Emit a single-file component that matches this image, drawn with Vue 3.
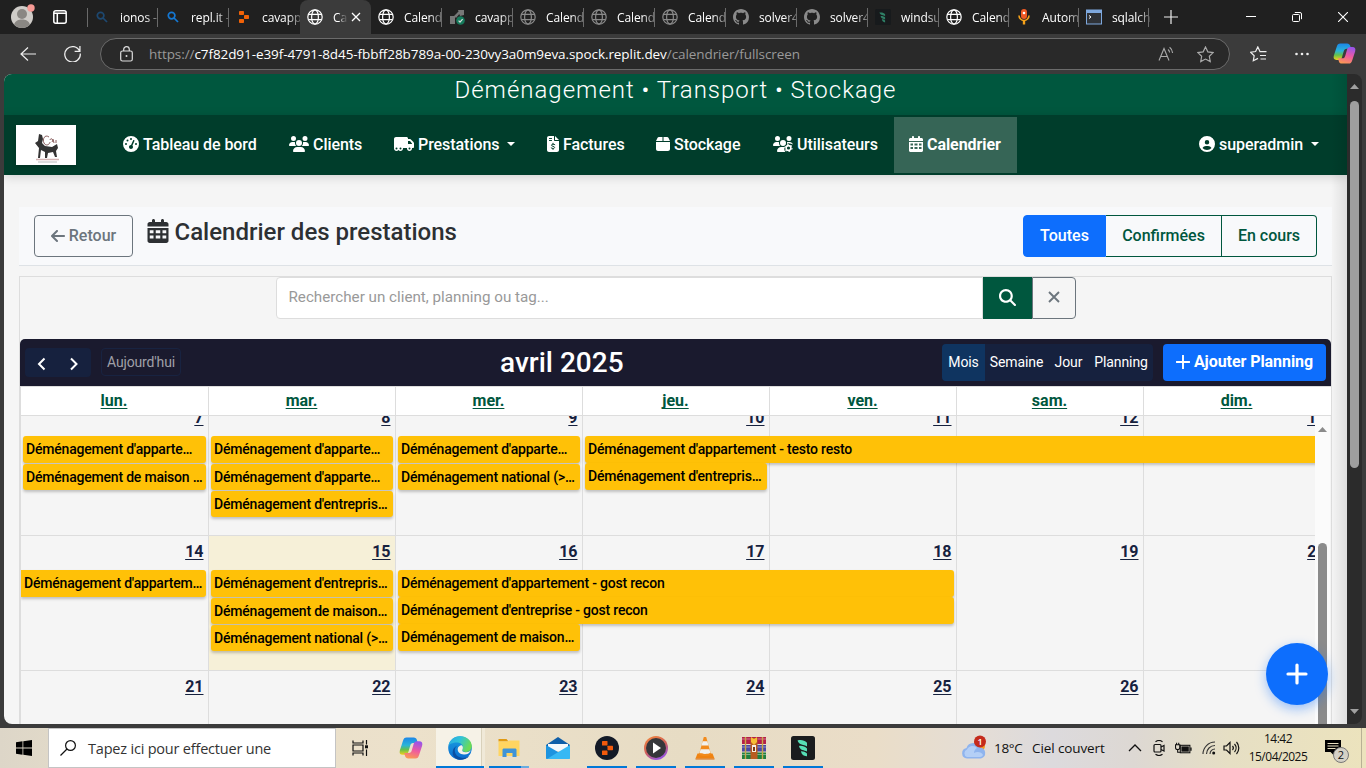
<script setup>
const globe = '<g fill="none" stroke="currentColor" stroke-width="1.2"><circle cx="8" cy="8" r="7.2"/><ellipse cx="8" cy="8" rx="3.4" ry="7.2"/><path d="M1.6 5.3h12.8M1.6 10.7h12.8"/></g>'
const lens = '<g fill="none" stroke="currentColor" stroke-width="1.7"><circle cx="6.6" cy="6.6" r="3.3"/><path d="M9 9l4 4"/></g>'
const github = '<path fill="currentColor" fill-rule="evenodd" d="M8 0C3.58 0 0 3.58 0 8c0 3.54 2.29 6.53 5.47 7.59.4.07.55-.17.55-.38 0-.19-.01-.82-.01-1.49-2.01.37-2.53-.49-2.69-.94-.09-.23-.48-.94-.82-1.13-.28-.15-.68-.52-.01-.53.63-.01 1.08.58 1.23.82.72 1.21 1.87.87 2.33.66.07-.52.28-.87.51-1.07-1.78-.2-3.64-.89-3.64-3.95 0-.87.31-1.59.82-2.15-.08-.2-.36-1.02.08-2.12 0 0 .67-.21 2.2.82.64-.18 1.32-.27 2-.27s1.36.09 2 .27c1.53-1.04 2.2-.82 2.2-.82.44 1.1.16 1.92.08 2.12.51.56.82 1.27.82 2.15 0 3.07-1.87 3.75-3.65 3.95.29.25.54.73.54 1.48 0 1.07-.01 1.93-.01 2.2 0 .21.15.46.55.38A8.01 8.01 0 0 0 16 8c0-4.42-3.58-8-8-8z"/>'
const replit = '<g fill="#f26207"><rect x="3" y="2" width="5" height="4" rx=".8"/><rect x="8" y="6" width="5" height="4" rx=".8"/><rect x="3" y="10" width="5" height="4" rx=".8"/></g>'
const quill = '<rect width="16" height="16" rx="1.5" fill="#171a1c"/><path fill="#2f8066" d="M4.4 3.6c2.2-.5 4.4.1 5.7 1.6v2.1C8.500 6.200 5.500 6.700 4.400 3.600zM5.600 7c1.500-.2 3.500.3 4.500 1.500v2C8.700 9.700 6.200 9.900 5.600 7zM6.800 10.300c1.300 0 2.500.4 3.300 1.200v1.900c-1.600-.1-3-1.200-3.300-3.100z"/>'
const tabs = [
  { i: lens, c: 'lens-dim', t: 'ionos -', sep: 1 },
  { i: lens, c: 'lens-blue', t: 'repl.it -', sep: 1 },
  { i: replit, c: '', t: 'cavapp' },
  { i: globe, c: 'white', t: 'Ca', active: 1 },
  { i: globe, c: 'white', t: 'Calend', sep: 1 },
  { i: '<path fill="#777" d="M1 7h5v8H1zM5 7l5-5 2 1-5 6zM9 1h6v5l-4 1z"/><circle cx="11.500" cy="11.500" r="4.300" fill="#157a5b"/><path d="M9.600 11.600l1.400 1.500 2.600-3" fill="none" stroke="#ddd" stroke-width="1.200"/>', c: '', t: 'cavapp', sep: 1 },
  { i: globe, c: 'dim', t: 'Calend', sep: 1 },
  { i: globe, c: 'dim', t: 'Calend', sep: 1 },
  { i: globe, c: 'dim', t: 'Calend', sep: 1 },
  { i: github, c: 'dim', t: 'solver4', sep: 1 },
  { i: github, c: 'dim', t: 'solver4', sep: 1 },
  { i: quill, c: '', t: 'windsu', sep: 1 },
  { i: globe, c: 'white', t: 'Calend', sep: 1, n: 1 },
  { i: '<rect x="5" y="0" width="6" height="10" rx="3" fill="#ee5a24"/><path d="M3 6.500a5 5 0 0 0 10 0" fill="none" stroke="#f6a21a" stroke-width="1.600"/><path d="M8 11.500v4" stroke="#f6a21a" stroke-width="2.400"/><circle cx="8" cy="4" r="1.300" fill="#fff"/>', c: '', t: 'Autom', sep: 1, n: 1 },
  { i: '<rect x=".5" y="1" width="15" height="14" fill="#2f3237" stroke="#7ea8de"/><path d="M0 1h16v3H0z" fill="#7ea8de"/><path d="M3 6.500l2 1.500-2 1.500" stroke="#fff" fill="none"/>', c: '', t: 'sqlalch', sep: 1, n: 1 },
]

const fa = {
  gauge: ['0 0 512 512', '<path fill="currentColor" fill-rule="evenodd" d="M0 256a256 256 0 1 1 512 0A256 256 0 1 1 0 256zm288-160a32 32 0 1 0-64 0 32 32 0 1 0 64 0zM256 416c35.300 0 64-28.700 64-64 0-17.400-6.900-33.100-18.100-44.600L366 161.700c5.300-12.100-.2-26.300-12.300-31.600s-26.300.2-31.600 12.300L257.900 288c-.600 0-1.300 0-1.900 0-35.300 0-64 28.700-64 64s28.700 64 64 64zM176 144a32 32 0 1 0-64 0 32 32 0 1 0 64 0zM96 288a32 32 0 1 0 0-64 32 32 0 1 0 0 64zm352-32a32 32 0 1 0-64 0 32 32 0 1 0 64 0z"/>'],
  users: ['0 0 640 512', '<path fill="currentColor" d="M144 0a80 80 0 1 1 0 160A80 80 0 1 1 144 0zM512 0a80 80 0 1 1 0 160A80 80 0 1 1 512 0zM0 298.700C0 239.800 47.800 192 106.700 192l42.700 0c15.900 0 31 3.500 44.600 9.700c-1.300 7.200-1.900 14.700-1.900 22.300c0 38.200 16.800 72.500 43.300 96L21.300 320C9.600 320 0 310.400 0 298.700zM405.300 320c26.600-23.500 43.300-57.800 43.300-96c0-7.600-.7-15-1.900-22.300c13.600-6.300 28.700-9.700 44.600-9.700l42.700 0C592.200 192 640 239.800 640 298.700c0 11.800-9.600 21.300-21.300 21.300l-213.300 0zM224 224a96 96 0 1 1 192 0 96 96 0 1 1 -192 0zM128 485.300C128 411.700 187.700 352 261.300 352l117.300 0C452.300 352 512 411.700 512 485.300c0 14.700-11.900 26.700-26.700 26.700l-330.700 0c-14.700 0-26.700-11.900-26.700-26.700z"/>'],
  truck: ['0 0 640 512', '<path fill="currentColor" fill-rule="evenodd" d="M64 32C28.700 32 0 60.700 0 96V400c0 44.200 35.800 80 80 80 26.200 0 49.400-12.600 64-32 14.600 19.400 37.800 32 64 32 44.200 0 80-35.800 80-80 0-5.500-.6-10.800-1.600-16H417.600c-1 5.200-1.600 10.500-1.600 16 0 44.200 35.800 80 80 80s80-35.800 80-80c0-5.500-.6-10.800-1.600-16H608c17.700 0 32-14.300 32-32V238.600c0-17-6.700-33.300-18.700-45.300L557.300 129.300C545.300 117.300 529 96 512 96H448V80c0-26.500-21.500-48-48-48zM576 256V238.600L512 160h-64v96zM80 368a32 32 0 1 1 0 64 32 32 0 1 1 0-64zm128 0a32 32 0 1 1 0 64 32 32 0 1 1 0-64zm288 0a32 32 0 1 1 0 64 32 32 0 1 1 0-64z"/>'],
  invoice: ['0 0 384 512', '<path fill="currentColor" d="M64 0C28.700 0 0 28.700 0 64V448c0 35.300 28.700 64 64 64H320c35.300 0 64-28.700 64-64V160H256c-17.700 0-32-14.300-32-32V0zM256 0V128H384z"/><g fill="none" stroke="#003d2b" stroke-width="30" stroke-linecap="round"><path d="M78 80h68M78 144h68M250 276c-30-22-105-24-108 18-3 44 104 26 102 72-2 42-74 40-110 16M192 232v32M192 400v32"/></g>'],
  box: ['0 0 448 512', '<path fill="currentColor" d="M50.700 58.500L0 160l208 0 0-128L93.700 32C75.500 32 58.900 42.300 50.700 58.500zM240 160l208 0L397.300 58.500C389.100 42.300 372.500 32 354.300 32L240 32l0 128zm208 32L0 192 0 416c0 35.300 28.700 64 64 64l320 0c35.300 0 64-28.700 64-64l0-224z"/>'],
  gear: ['0 0 640 512', '<path fill="currentColor" d="M144 160A80 80 0 1 0 144 0a80 80 0 1 0 0 160zm368 0A80 80 0 1 0 512 0a80 80 0 1 0 0 160zM0 298.700C0 310.400 9.600 320 21.300 320H235.400c-26.600-23.500-43.300-57.800-43.300-96 0-7.600.7-15 1.900-22.300-13.600-6.300-28.700-9.700-44.600-9.700H106.700C47.800 192 0 239.800 0 298.700zM320 320a96 96 0 1 0 0-192 96 96 0 1 0 0 192zM261.300 352C187.700 352 128 411.700 128 485.300c0 14.700 11.900 26.700 26.700 26.700H400c-40-40-50-110-20-160zM446 202c14-7 29-10 45-10h43c50 0 92 34 104 80l-60-28-84-12-44 20z"/><circle cx="496" cy="384" r="76" fill="none" stroke="currentColor" stroke-width="50"/><circle cx="496" cy="384" r="112" fill="none" stroke="currentColor" stroke-width="34" stroke-dasharray="50 67.300"/>'],
  cal: ['0 0 448 512', '<path fill="currentColor" d="M128 0c17.700 0 32 14.300 32 32V64H288V32c0-17.700 14.300-32 32-32s32 14.300 32 32V64h48c26.500 0 48 21.500 48 48v48H0V112C0 85.500 21.500 64 48 64H96V32c0-17.700 14.300-32 32-32z"/><path fill="currentColor" fill-rule="evenodd" d="M0 192H448V464c0 26.500-21.500 48-48 48H48c-26.500 0-48-21.500-48-48V192zM48 240v64h80v-64zM176 240v64h96v-64zM320 240v64h80v-64zM48 352v64h80v-64zM176 352v64h96v-64zM320 352v64h80v-64z"/>'],
  user: ['0 0 512 512', '<path fill="currentColor" fill-rule="evenodd" d="M399 384.200C376.900 345.800 335.400 320 288 320l-64 0c-47.400 0-88.900 25.800-111 64.200c35.200 39.200 86.200 63.800 143 63.800s107.800-24.700 143-63.800zM0 256a256 256 0 1 1 512 0A256 256 0 1 1 0 256zm256 16a72 72 0 1 0 0-144 72 72 0 1 0 0 144z"/>'],
}
const nav = [
  { i: 'gauge', t: 'Tableau de bord', w: 166, iw: 16 },
  { i: 'users', t: 'Clients', w: 105, iw: 20 },
  { i: 'truck', t: 'Prestations', w: 153, iw: 20, caret: 1 },
  { i: 'invoice', t: 'Factures', w: 109, iw: 12 },
  { i: 'box', t: 'Stockage', w: 117, iw: 14 },
  { i: 'gear', t: 'Utilisateurs', w: 137, iw: 20 },
  { i: 'cal', t: 'Calendrier', w: 123, iw: 14, on: 1 },
]
const days = ['lun.', 'mar.', 'mer.', 'jeu.', 'ven.', 'sam.', 'dim.']
// events: [column, span, line, label, modifier classes]
const weeks = [
  { c: 'first', d: [7, 8, 9, 10, 11, 12, 13], e: [
    [1, 1, 1, "Déménagement d'apparte…"], [1, 1, 2, 'Déménagement de maison …', 'loose'],
    [2, 1, 1, "Déménagement d'apparte…"], [2, 1, 2, "Déménagement d'apparte…", 'loose'], [2, 1, 3, "Déménagement d'entrepris…", 'loose'],
    [3, 1, 1, "Déménagement d'apparte…"], [3, 1, 2, 'Déménagement national (>…', 'loose'],
    [4, 4, 1, "Déménagement d'appartement - testo resto"], [4, 1, 2, "Déménagement d'entrepris…"]] },
  { c: '', d: [14, 15, 16, 17, 18, 19, 20], e: [
    [1, 1, 1, "Déménagement d'appartem…", 'cont'],
    [2, 1, 1, "Déménagement d'entrepris…"], [2, 1, 2, 'Déménagement de maison…', 'loose'], [2, 1, 3, 'Déménagement national (>…', 'loose'],
    [3, 3, 1, "Déménagement d'appartement - gost recon"], [3, 3, 2, "Déménagement d'entreprise - gost recon"], [3, 1, 3, 'Déménagement de maison…']] },
  { c: '', d: [21, 22, 23, 24, 25, 26], e: [] },
]

const copilot = '<path d="M7.500 1.500h7.200c1.800 0 2.800 1 3.300 2.800l.8 2.700h-4.600c-1.800 0-2.500 1-3 2.700l-1.900 6.500c-.5 1.700-1.600 2.600-3.300 2.600H3.800c-2.800 0-3.700-1.700-2.900-4.600L3.900 5c.7-2.400 1.700-3.500 3.600-3.500z" fill="url(#cpA)"/><path d="M16.500 22.500H9.300c-1.800 0-2.800-1-3.300-2.800L5.200 17h4.600c1.800 0 2.500-1 3-2.700l1.900-6.500c.5-1.700 1.600-2.600 3.300-2.600h2.200c2.800 0 3.700 1.700 2.900 4.600l-3 9.200c-.7 2.400-1.700 3.500-3.600 3.500z" fill="url(#cpB)"/>'
const apps = [
  { k: 'cop', s: copilot },
  { k: 'edge', u: 1, s: '<circle cx="12" cy="12" r="11.800" fill="url(#egB)"/><path d="M.4 10C1.300 4.200 6 .2 12 .2c7 0 11.800 4.700 11.800 9.800 0 3.700-2.700 6-6 6-2.300 0-3.800-.8-3.800-1.900 0-.8 1-1.200 1-2.900C15 8.800 12.400 6.600 9 6.600 4.600 6.600 1 8.400.4 10z" fill="url(#egA)"/><path d="M9.600 9.500c-3 1.700-3.600 5.300-1.900 8.600 2.300 4.200 8.600 5.300 13.800 1.700-2.600 3.500-8 5-12.300 3.400C3 20.500 3 12 9.600 9.500z" fill="#0b4fa2"/><path d="M13.900 9.200c1.200 1.400 1.300 3 .5 4.300-.8 1.500.6 2.700 3.600 2.700 2 0 3.800-.8 4.900-2-1 3-4 4.500-7 4.300-4-.300-6.400-2.600-6.200-5.500.1-2 1.800-3.800 4.200-3.800z" fill="#f5f2e8"/>' },
  { k: 'exp', u: 1, s: '<path d="M1.500 3h8l2 2.500H1.500z" fill="#e09a12"/><path d="M1.500 5.500l9 0 1.500-1h10.500V20H1.500z" fill="#ffd560"/><path d="M5.500 21v-7c0-1 .5-1.500 1.500-1.500h11c1 0 1.500.5 1.500 1.500v7h-4v-4h-6v4z" fill="#3f94d8"/>' },
  { k: 'mail', s: '<path d="M0 9L12 1l12 8v3H0z" fill="#0f5ea8"/><path d="M2 8h20v7H2z" fill="#f5f8fb"/><path d="M0 9l24 14H1c-.6 0-1-.4-1-1z" fill="#1d93df"/><path d="M24 9L9 18l-8 5h22c.6 0 1-.4 1-1z" fill="#37b8f4"/>' },
  { k: 'rep', u: 1, s: '<circle cx="12" cy="12" r="12" fill="#131a27"/><g fill="#f25a0c"><rect x="7" y="5" width="5.500" height="4.500" rx=".6"/><rect x="12.500" y="9.700" width="5.500" height="4.500" rx=".6"/><rect x="7" y="14.500" width="5.500" height="4.500" rx=".6"/></g>' },
  { k: 'med', u: 1, s: '<circle cx="12" cy="12" r="12" fill="url(#mpA)"/><circle cx="12" cy="12" r="10" fill="#35363a"/><path d="M9 6.500l8 5.500-8 5.500z" fill="#fff"/>' },
  { k: 'vlc', u: 1, s: '<path d="M4.500 17.500h15l2 5h-19z" fill="#f08311"/><path d="M10.800 1h2.400l4.800 17.500c-2 2-10 2-12 0z" fill="#f28b1d"/><path d="M9.700 5.200h4.600l1.200 4.300h-7zM7.600 13.200h8.800l1 3.500c-2 1.600-8.800 1.600-10.800 0z" fill="#f1f1ef"/><path d="M2.500 22.500h19v1h-19z" fill="#d8680a"/>' },
  { k: 'rar', u: 1, s: '<path d="M0 1h24v7H0z" fill="#b51f48"/><path d="M0 9h24v6.500H0z" fill="#4a48a4"/><path d="M0 16.500h24V23H0z" fill="#1f8040"/><path d="M0 3h24M0 11h24M0 18.500h24" stroke="#ffffff66" stroke-width="1"/><path d="M3.500 1v22M20.500 1v22" stroke="#c9a648" stroke-width="1.400"/><path d="M8.500 2h7v21h-7z" fill="#b95c20"/><path d="M9 1l3 2 3-2v5l-3 3-3-3z" fill="#f6bd34"/><path d="M10 9h4v7h-4z" fill="#f7eee2"/><path d="M11 11h2v4h-2z" fill="#7a3c17"/>' },
  { k: 'wind', u: 1, s: '<rect width="24" height="24" rx="2.500" fill="#1a1c1e"/><path fill="#56dfb6" d="M6.500 4.500c3.500-1 7-.2 9.500 2.300v3.600c-3-2.200-8-.9-9.500-5.900zM8 10c2.700-.5 6 .4 8 2.400v3.100c-2.600-1.400-7.200-.9-8-5.500zM10 15.300c2.200-.1 4.300.6 6 2.100v2.800c-3 .2-5.700-1.700-6-4.900z"/>' },
]
</script>

<template>
  <div class="screen">
    <svg class="defs" width="0" height="0">
      <defs>
        <linearGradient id="cpA" x1="0" y1="0" x2="0" y2="1"><stop offset="0" stop-color="#1c86e8" /><stop offset=".45" stop-color="#2ab4d8" /><stop offset=".7" stop-color="#63c04c" /><stop offset="1" stop-color="#f3cf1c" /></linearGradient>
        <linearGradient id="cpB" x1=".6" y1="0" x2=".3" y2="1"><stop offset="0" stop-color="#9a55e8" /><stop offset=".5" stop-color="#ee5aa0" /><stop offset="1" stop-color="#fb9a52" /></linearGradient>
        <linearGradient id="egA" x1="0" y1="0" x2="1" y2=".4"><stop offset="0" stop-color="#2aa5e4" /><stop offset=".5" stop-color="#30c3d8" /><stop offset="1" stop-color="#6ddb54" /></linearGradient>
        <linearGradient id="egB" x1="0" y1="0" x2="0" y2="1"><stop offset="0" stop-color="#1aa0e0" /><stop offset="1" stop-color="#0b6bd0" /></linearGradient>
        <linearGradient id="mpA" x1="0" y1="0" x2=".5" y2="1"><stop offset="0" stop-color="#f58a3c" /><stop offset=".6" stop-color="#d0605a" /><stop offset="1" stop-color="#9a55d8" /></linearGradient>
      </defs>
    </svg>

    <div class="tabbar">
      <svg class="avatar" viewBox="0 0 26 26"><circle cx="12" cy="14" r="11" fill="#cfccc8" /><circle cx="12" cy="11" r="5" fill="#8a8783" /><path d="M4 21.500c1.500-4 4.500-5 8-5s6.500 1 8 5c-4 4.500-12 4.500-16 0z" fill="#8a8783" /><circle cx="21" cy="5" r="3.700" fill="#f79a95" /></svg>
      <svg class="panel" viewBox="0 0 14 14"><rect x=".8" y=".8" width="12.400" height="12.400" rx="2" fill="none" stroke="#fff" stroke-width="1.500" /><path d="M1 3.300h12M4.300 4v9" stroke="#fff" stroke-width="1.500" /></svg>
      <div class="tabs">
        <div v-for="(t, k) in tabs" :key="k" class="tab" :class="{ active: t.active, sep: t.sep, thin: t.n }">
          <svg viewBox="0 0 16 16" :class="t.c" v-html="t.i"></svg>
          <span class="tt">{{ t.t }}</span>
          <svg v-if="t.active" class="close" viewBox="0 0 10 10"><path d="M1 1l8 8M9 1L1 9" stroke="#fff" stroke-width="1.300" /></svg>
        </div>
      </div>
      <svg class="newtab" viewBox="0 0 14 14"><path d="M7 0v14M0 7h14" stroke="#eee" stroke-width="1.200" /></svg>
      <div class="winbtns">
        <svg viewBox="0 0 10 10"><path d="M0 4.500h10" stroke="#fff" /></svg>
        <svg viewBox="0 0 10 10"><rect x=".5" y="2.500" width="7" height="7" rx="1" fill="none" stroke="#fff" /><path d="M2.800.5H8A1.500 1.500 0 0 1 9.500 2v5.200" fill="none" stroke="#fff" /></svg>
        <svg viewBox="0 0 10 10"><path d="M0 0l10 10M10 0L0 10" stroke="#fff" stroke-width="1.100" /></svg>
      </div>
    </div>

    <div class="toolbar">
      <svg class="back" viewBox="0 0 16 16"><path d="M8 1.500L1 8l7 6.500M1 8h15" fill="none" stroke="#eee" stroke-width="1.200" /></svg>
      <svg class="reload" viewBox="0 0 16 16"><path d="M14.800 6A7.300 7.300 0 1 0 15.300 8M15 1v5h-5" fill="none" stroke="#eee" stroke-width="1.200" /></svg>
      <div class="address">
        <svg class="lock" viewBox="0 0 13 16"><rect x=".7" y="5" width="11.600" height="10" rx="1.800" fill="none" stroke="#ddd" stroke-width="1.200" /><path d="M3.700 5V3.500a2.800 2.800 0 0 1 5.600 0V5" fill="none" stroke="#ddd" stroke-width="1.200" /><circle cx="6.500" cy="10" r="1" fill="#ddd" /></svg>
        <span class="url"><i>https://</i>c7f82d91-e39f-4791-8d45-fbbff28b789a-00-230vy3a0m9eva.spock.replit.dev<i>/calendrier/fullscreen</i></span>
        <svg class="read" viewBox="0 0 16 16"><path d="M1 14.500L6 2.500l5 12M2.800 10.500h6.500M10 3.500a4 4 0 0 1 1.600 3M11.600 1.300a7.500 7.500 0 0 1 3 5.700" fill="none" stroke="#aaa" stroke-width="1.100" /></svg>
        <svg class="star" viewBox="0 0 16 16"><path d="M8 .9l2.200 4.600 5 .7-3.600 3.500.9 5L8 12.300l-4.500 2.400.9-5L.8 6.200l5-.7z" fill="none" stroke="#aaa" stroke-width="1.100" /></svg>
      </div>
      <svg class="favs" viewBox="0 0 17 16"><path d="M9.500 4.600L7.800.9 5.600 5.500l-5 .7 3.600 3.500-.9 5L8 12.400M9.500 4.600l.5 1h6.500M10 9.500h6M10.500 13h5.500" fill="none" stroke="#eee" stroke-width="1.200" /></svg>
      <svg class="dots" viewBox="0 0 14 4"><circle cx="1.500" cy="2" r="1.300" fill="#eee" /><circle cx="7" cy="2" r="1.300" fill="#eee" /><circle cx="12.500" cy="2" r="1.300" fill="#eee" /></svg>
      <svg class="cop" viewBox="0 0 24 24" v-html="copilot"></svg>
    </div>

    <div class="frame">
      <div class="page">
        <div class="banner">Déménagement • Transport • Stockage</div>
        <div class="nav">
          <svg class="logo" viewBox="0 0 60 40">
            <rect width="60" height="40" fill="#fff" />
            <path d="M23 9l3 1 1 4-1 4 3 3 7 1 5-3 1 4-2 3 1 6h-2l-2-5-5 1-1 5h-2v-6l-4-2-1 8h-2l1-10-4-5 3-2z" fill="#333" />
            <path d="M33 12c-4-3-7 2-5 6s6 1 6-1M34 15c1-3 4 0 2 2M37 14l1 4M40 15v3" fill="none" stroke="#7a4a4a" stroke-width=".9" />
            <path d="M20 34.500h23" stroke="#d4b4b4" stroke-width="1.400" /><path d="M22 37h19" stroke="#bbb" />
          </svg>
          <div v-for="n in nav" :key="n.t" class="item" :class="{ on: n.on }" :style="{ width: n.w + 'px' }">
            <svg :viewBox="fa[n.i][0]" :style="{ width: n.iw + 'px' }" v-html="fa[n.i][1]"></svg><span>{{ n.t }}</span><b v-if="n.caret" class="caret"></b>
          </div>
          <div class="item me"><svg :viewBox="fa.user[0]" v-html="fa.user[1]"></svg><span>superadmin</span><b class="caret"></b></div>
        </div>

        <div class="head">
          <div class="retour"><svg viewBox="0 0 448 512"><path fill="currentColor" d="M9.400 233.400c-12.500 12.500-12.500 32.800 0 45.300l160 160c12.500 12.500 32.800 12.500 45.300 0s12.500-32.800 0-45.300L109.200 288 416 288c17.700 0 32-14.300 32-32s-14.300-32-32-32l-306.700 0L214.600 118.600c12.500-12.500 12.500-32.800 0-45.300s-32.800-12.500-45.300 0l-160 160z" /></svg>Retour</div>
          <div class="title"><svg :viewBox="fa.cal[0]" v-html="fa.cal[1]"></svg><span>Calendrier des prestations</span></div>
          <div class="filters"><span class="sel">Toutes</span><span class="mid">Confirmées</span><span class="last">En cours</span></div>
        </div>

        <div class="calbox">
          <div class="search">
            <div class="input">Rechercher un client, planning ou tag...</div>
            <div class="go"><svg viewBox="0 0 512 512"><path fill="#fff" d="M416 208c0 45.900-14.900 88.300-40 122.700L502.600 457.400c12.500 12.500 12.500 32.800 0 45.300s-32.800 12.500-45.300 0L330.700 376c-34.400 25.200-76.800 40-122.700 40C93.100 416 0 322.900 0 208S93.100 0 208 0S416 93.100 416 208zM208 352a144 144 0 1 0 0-288 144 144 0 1 0 0 288z" /></svg></div>
            <div class="clear"><svg viewBox="0 0 12 12"><path d="M1 1l10 10M11 1l-10 10" stroke="#6c757d" stroke-width="1.900" /></svg></div>
          </div>
          <div class="fcbar">
            <div class="prevnext">
              <svg viewBox="0 0 10 14"><path d="M7.500 1.500L2 7 7.500 12.500" fill="none" stroke="#fff" stroke-width="2" /></svg>
              <svg viewBox="0 0 10 14"><path d="M2 1.500L7.500 7 2 12.500" fill="none" stroke="#fff" stroke-width="2" /></svg>
            </div>
            <div class="today">Aujourd'hui</div>
            <div class="month">avril 2025</div>
            <div class="views"><span class="v1">Mois</span><span class="v2">Semaine</span><span class="v3">Jour</span><span class="v4">Planning</span></div>
            <div class="add"><svg viewBox="0 0 14 14"><path d="M7 .500v13M.5 7h13" stroke="#fff" stroke-width="1.900" stroke-linecap="round" /></svg>Ajouter Planning</div>
          </div>
          <div class="dayhead"><span v-for="d in days" :key="d"><u>{{ d }}</u></span></div>
          <div class="scroller">
            <div class="weeks">
              <div v-for="(w, r) in weeks" :key="r" class="week" :class="w.c">
                <div v-for="(d, c) in w.d" :key="d" class="cell" :class="{ now: d === 15 }" :style="{ gridColumn: c + 1 }"><u>{{ d }}</u></div>
                <div v-for="(e, k) in w.e" :key="'e' + k" class="ev" :class="e[4]" :style="{ gridColumn: e[0] + ' / span ' + e[1], gridRow: e[2] + 1 }">{{ e[3] }}</div>
              </div>
            </div>
            <div class="inner-sb"><svg viewBox="0 0 9 5"><path d="M0 5L4.500 0 9 5z" fill="#8b8b8b" /></svg><div class="thumb"></div></div>
          </div>
        </div>
        <div class="edge-shade"></div>
        <div class="fab"><svg viewBox="0 0 22 22"><path d="M11 2v18M2 11h18" stroke="#fff" stroke-width="3.200" stroke-linecap="round" /></svg></div>
      </div>
      <div class="outer-sb">
        <svg viewBox="0 0 9 5"><path d="M0 5L4.500 0 9 5z" fill="#a0a0a0" /></svg>
        <div class="thumb"></div>
        <svg class="down" viewBox="0 0 9 5"><path d="M0 0l4.500 5L9 0z" fill="#a0a0a0" /></svg>
      </div>
    </div>

    <div class="taskbar">
      <svg class="win" viewBox="0 0 16 16"><path d="M0 2.200L6.500 1.300v6.300H0zM7.300 1.200L16 0v7.600H7.300zM0 8.400h6.500v6.300L0 13.800zM7.300 8.400H16V16l-8.700-1.200z" /></svg>
      <div class="tsearch"><svg viewBox="0 0 16 16"><circle cx="10.500" cy="5.500" r="4.900" fill="none" stroke="#111" stroke-width="1.200" /><path d="M7 9L.5 15.500" stroke="#111" stroke-width="1.200" /></svg><span>Tapez ici pour effectuer une</span></div>
      <svg class="tview" viewBox="0 0 17 16"><g fill="none" stroke="#111" stroke-width="1.200"><path d="M1 .500v2.500h10V.5M1 15.500V13h10v2.500M1 5h10v6H1zM14.500 0v4.500M14.500 9.500V16" /></g><rect x="13" y="5.300" width="3" height="3" fill="#111" /></svg>
      <div v-for="a in apps" :key="a.k" class="app" :class="[a.k, { run: a.u }]"><svg viewBox="0 0 24 24" v-html="a.s"></svg></div>
      <div class="weather">
        <svg viewBox="0 0 26 26"><circle cx="18" cy="11" r="6" fill="#f59a23" /><path d="M6 23.500a5.300 5.300 0 0 1-.5-10.500A7.200 7.200 0 0 1 19 12.500a5.600 5.600 0 0 1 1 11z" fill="#8fb4ee" /><path d="M6 22a4 4 0 0 1 0-7.500A6 6 0 0 1 16 13c-2 1-3 3-3 5 3-2 8-1 9 2-1 2-3 2-4 2z" fill="#b4cff6" /><circle cx="19" cy="6.500" r="6" fill="#c42b1c" /></svg>
        <span class="wb">1</span>
        <span class="temp">18°C</span><span class="sky">Ciel couvert</span>
      </div>
      <div class="tray">
        <svg class="t1" viewBox="0 0 14 8"><path d="M1 7l6-6 6 6" fill="none" stroke="#111" stroke-width="1.300" /></svg>
        <svg class="t2" viewBox="0 0 12 16"><g fill="none" stroke="#111" stroke-width="1.200"><rect x="1" y="4.500" width="7" height="7.500" rx="1" /><path d="M8 7l3-1.500v5.500L8 9.500M2.500 1.700C4.500.300 7.500.300 9.500 1.700M2.500 14.300c2 1.400 5 1.400 7 0" /></g></svg>
        <svg class="t3" viewBox="0 0 16 12"><rect x="5" y="3" width="9" height="7" fill="#e4dfd2" stroke="#111" /><path d="M6 4h7v5H6z" fill="#111" /><path d="M15 5v3" stroke="#111" stroke-width="1.300" /><path d="M.5 2.500h4v2.500a2 2 0 0 1-4 0zM1.500.5v2M3.500.5v2M2.500 7v2.500H5" fill="none" stroke="#111" /></svg>
        <svg class="t4" viewBox="0 0 14 14"><g fill="none" stroke="#333" stroke-width="1.100"><path d="M1 13A12 12 0 0 1 13 1M4.500 13A8.500 8.500 0 0 1 13 4.500M8 13a5 5 0 0 1 5-5" /></g><circle cx="11.700" cy="12" r="1.500" fill="#111" /></svg>
        <svg class="t5" viewBox="0 0 17 14"><g fill="none" stroke="#111" stroke-width="1.200"><path d="M1 5h2.500L7 1.500v11L3.500 9H1zM9.500 5a3 3 0 0 1 0 4M11.500 3a6 6 0 0 1 0 8M13.500 1a9 9 0 0 1 0 12" /></g></svg>
      </div>
      <div class="clock"><span class="hm">14:42</span><span class="dt">15/04/2025</span></div>
      <div class="notif"><svg viewBox="0 0 16 16"><path d="M0 0h16v12H9v3.500L5.500 12H0z" /><path d="M2.500 3.500h11M2.500 6h11M2.500 8.500h8" stroke="#e8dfc0" /></svg><span>2</span></div>
      <div class="peek"></div>
    </div>
  </div>
</template>

<style>
html, body { margin: 0; overflow: hidden; background: #3b3b3b; }
</style>
<style scoped>
* { box-sizing: border-box; }
.screen { width: 1366px; height: 768px; overflow: hidden; background: #3b3b3b; font-family: Roboto, sans-serif; display: flex; flex-direction: column; position: relative; }
.defs { position: absolute; }
svg { display: block; flex: none; }
.tabbar { height: 34px; background: #202020; display: flex; align-items: center; font: 12px "Open Sans", sans-serif; color: #fff; flex: none; }
.avatar { width: 26px; height: 26px; margin: -3px 0 0 10px; }
.panel { width: 14px; height: 14px; margin-left: 17px; }
.tabs { display: flex; margin-left: 20px; height: 34px; }
.tab { width: 71px; height: 34px; display: flex; align-items: center; position: relative; padding-left: 7px; flex: none; }
.tab.thin { width: 70px; }
.tab.sep::after { content: ""; position: absolute; right: 0; top: 8px; width: 1px; height: 19px; background: #6a6a6a; }
.tab:first-child::before { content: ""; position: absolute; left: 0; top: 8px; width: 1px; height: 19px; background: #6a6a6a; }
.tab svg { width: 16px; height: 16px; }
.tt { margin-left: 10px; width: 38px; white-space: nowrap; letter-spacing: -.1px; -webkit-mask-image: linear-gradient(90deg, #000 65%, rgba(0,0,0,.3)); mask-image: linear-gradient(90deg, #000 65%, rgba(0,0,0,.3)); }
.white { color: #fff; } .dim { color: #8a8a8a; } .lens-dim { color: #1d4870; } .lens-blue { color: #1478d4; }
.tab.active { background: #3b3b3b; border-radius: 8px 8px 0 0; }
.tab.active .tt { width: 14px; -webkit-mask-image: linear-gradient(90deg, #000 40%, rgba(0,0,0,.2) 85%); mask-image: linear-gradient(90deg, #000 40%, rgba(0,0,0,.2) 85%); }
.tab.active .close { width: 10px; height: 10px; margin-left: 4px; }
.newtab { width: 14px; height: 14px; margin-left: 15px; }
.winbtns { margin-left: auto; display: flex; gap: 36px; padding-right: 18px; }
.winbtns svg { width: 10px; height: 10px; }
.toolbar { height: 39px; display: flex; align-items: center; flex: none; }
.back { width: 16px; height: 16px; margin-left: 20px; }
.reload { width: 17px; height: 17px; margin-left: 28px; }
.address { margin-left: 19px; width: 1130px; height: 32px; border: 1px solid #6b6b6b; border-radius: 16px; background: #292929; display: flex; align-items: center; margin-top: 1px; flex: none; }
.lock { width: 13px; height: 16px; margin: -1px 0 0 19px; }
.url { margin: -1px 0 0 16px; font: 13.5px "Open Sans", sans-serif; color: #fff; white-space: nowrap; letter-spacing: -.08px; width: 1000px; }
.url i { font-style: normal; color: #999; }
.read { width: 16px; height: 16px; margin-left: 9px; }
.star { width: 17px; height: 17px; margin-left: 23px; }
.favs { width: 17px; height: 16px; margin-left: 20px; }
.dots { width: 14px; height: 4px; margin-left: 28px; }
.cop { width: 23px; height: 23px; margin-left: 24px; }
.frame { height: 650px; margin: 1px 4px 0 4px; display: flex; border-radius: 8px; overflow: hidden; flex: none; }
.page { width: 1343px; height: 650px; background: #f5f5f5; position: relative; overflow: hidden; flex: none; }
.banner { height: 41px; background: #00573e; color: #fff; font-weight: 300; font-size: 24px; line-height: 33px; text-align: center; letter-spacing: 1px; }
.nav { height: 60px; background: #003d2b; display: flex; align-items: center; box-shadow: 0 2px 10px rgba(0,0,0,.15); position: relative; color: #fff; font-size: 16px; font-weight: 500; }
.logo { width: 60px; height: 40px; margin: 0 31px 0 12px; box-shadow: 0 2px 4px rgba(0,0,0,.2); }
.item { height: 56px; display: flex; align-items: center; padding: 0 0 2px 16px; white-space: nowrap; flex: none; letter-spacing: -.06px; }
.item svg { height: 16px; margin: 0 4px 0 0; }
.item.on { background: #366556; padding-left: 15px; font-weight: 700; }
.item.me { margin-left: auto; padding: 0 28px 2px 0; }
.caret { border: 4px solid transparent; border-top-color: #fff; border-bottom: 0; margin-left: 8px; }
.head { margin: 32px 15px 0; height: 59px; background: #f8f9fb; border-bottom: 1px solid #dee2e6; display: flex; padding: 8px 15px; position: relative; }
.retour { width: 99px; height: 42px; border: 1px solid #6c757d; border-radius: 4px; color: #6c757d; font-size: 16px; font-weight: 500; display: flex; align-items: center; justify-content: center; padding-bottom: 1px; }
.retour svg { width: 14px; height: 16px; margin-right: 4px; }
.title { display: flex; margin-left: 14px; color: #2d3033; font-size: 24px; font-weight: 500; line-height: 34px; white-space: nowrap; }
.title svg { width: 22px; height: 24px; margin: 4px 5.500px 0 0; }
.filters { margin-left: auto; display: flex; height: 42px; font-size: 16px; font-weight: 500; color: #00573e; line-height: 40px; text-align: center; }
.filters span { border: 1px solid #00573e; }
.filters .sel { width: 83px; background: #0d6efd; color: #fff; border-color: #0d6efd; border-radius: 4px 0 0 4px; }
.filters .mid { width: 116px; border-left: 0; }
.filters .last { width: 95px; border-left: 0; border-radius: 0 4px 4px 0; }
.calbox { margin: 10px 15px 0; border: 1px solid #ddd; height: 470px; }
.search { display: flex; height: 42px; margin-left: 256px; }
.input { width: 707px; border: 1px solid #ddd; border-radius: 4px 0 0 4px; background: #fff; color: #999; font-size: 15.2px; line-height: 38px; padding-left: 11.500px; }
.go { width: 49px; background: #00573e; display: flex; align-items: center; justify-content: center; }
.go svg { width: 17px; height: 17px; margin-top: -2px; }
.clear { width: 44px; border: 1px solid #6c757d; border-radius: 0 4px 4px 0; display: flex; align-items: center; padding-left: 15px; }
.clear svg { width: 12px; height: 12px; margin-top: -2px; }
.fcbar { margin-top: 20px; height: 47px; background: #1a1a2e; border-radius: 5px 5px 0 0; display: flex; align-items: center; position: relative; color: #fff; }
.prevnext { width: 66px; height: 29px; background: #16213e; border-radius: 4px; margin-left: 5px; display: flex; align-items: center; gap: 22px; padding-left: 12px; }
.prevnext svg { width: 10px; height: 14px; margin-top: 2px; }
.today { width: 80px; height: 28px; margin: -1px 0 0 10px; border: 1px solid #182341; border-radius: 4px; color: #a0a0a8; font-size: 14px; line-height: 26px; text-align: center; letter-spacing: -.15px; }
.month { width: 124px; margin-left: 319px; font-size: 28px; font-weight: 500; white-space: nowrap; }
.views { margin-left: 318px; width: 211px; height: 37px; display: flex; background: #16213e; border-radius: 4px; font-size: 14px; line-height: 36px; text-align: center; letter-spacing: -.08px; }
.v1 { width: 43px; background: #0f3460; border-radius: 4px 0 0 4px; }
.v2 { width: 63px; } .v3 { width: 41px; } .v4 { width: 64px; }
.add { margin-left: 10px; width: 163px; height: 37px; background: #0d6efd; border-radius: 4px; display: flex; align-items: center; justify-content: center; font-size: 16px; font-weight: 700; white-space: nowrap; padding-bottom: 2px; letter-spacing: -.06px; }
.add svg { width: 14px; height: 14px; margin: 1px 4px 0 0; }
.dayhead { height: 30px; display: grid; grid-template-columns: 189px repeat(6, 187px); background: #fff; border: 1px solid #ddd; border-width: 1px 0; }
.dayhead span { border-right: 1px solid #ddd; text-align: center; font-size: 16px; font-weight: 700; color: #00573e; line-height: 27px; padding-right: 1px; }
.dayhead span:first-child { border-left: 1px solid #ddd; }
.dayhead span:last-child { border-color: transparent; }
u { text-underline-offset: 2px; text-decoration-thickness: 1px; text-decoration-skip-ink: none; }
.scroller { display: flex; height: 329px; overflow: hidden; border-left: 1px solid #ddd; }
.weeks { width: 1294px; overflow: hidden; flex: none; }
.week { display: grid; grid-template-columns: 188px repeat(6, 187px); grid-template-rows: 34px 27px 27px 27px 1fr; height: 135px; width: 1310px; }
.week.first { height: 134px; margin-top: -14px; }
.cell { grid-row: 1 / -1; border: 1px solid #ddd; border-width: 0 1px 1px 0; text-align: right; padding-right: 4.500px; font-size: 16px; font-weight: 700; color: #16213e; line-height: 32px; }
.week.first .cell { line-height: 31px; }
.cell.now { background: #f6f0d8; }
.ev { background: #ffc107; border-radius: 3px; box-shadow: 0 2px 3px rgba(0,0,0,.22); margin: 0 3px 0 2px; font-size: 14px; letter-spacing: -.2px; font-weight: 500; line-height: 26px; color: #000; padding: 0 0 0 3px; white-space: nowrap; z-index: 1; }
.ev.loose { margin-top: 1px; }
.ev.cont { margin-left: 0; border-radius: 0 3px 3px 0; }
.inner-sb { width: 15px; background: #fbfbfb; display: flex; flex-direction: column; align-items: center; padding-top: 11px; }
.inner-sb svg { width: 9px; height: 5px; }
.inner-sb .thumb { width: 9px; height: 300px; margin-top: 111px; border-radius: 5px; background: #8b8b8b; flex: none; }
.edge-shade { position: absolute; right: 0; top: 0; width: 16px; height: 650px; background: linear-gradient(90deg, rgba(0,0,0,0), rgba(0,0,0,.09)); }
.fab { position: absolute; left: 1262px; top: 569px; width: 62px; height: 62px; border-radius: 50%; background: #0d6efd; box-shadow: 0 4px 12px rgba(13,110,253,.4); display: flex; align-items: center; justify-content: center; z-index: 3; }
.fab svg { width: 22px; height: 22px; }
.outer-sb { width: 15px; background: #2b2b2b; display: flex; flex-direction: column; align-items: center; padding: 10px 0; }
.outer-sb svg { width: 9px; height: 5px; }
.outer-sb .thumb { width: 9px; height: 367px; margin-top: 12px; border-radius: 5px; background: #9e9e9e; }
.outer-sb .down { margin-top: auto; }
.taskbar { margin-top: 4px; height: 40px; display: flex; align-items: center; background: linear-gradient(90deg, #ddd6c8 0, #e8dfca 10%, #ece1cb 30%, #e7dcc4 50%, #eaddc8 64%, #e4ddd6 72%, #dcdadd 77%, #ddd8d3 83%, #e6dfc4 90%, #ece3bd 100%); font-family: "Open Sans", sans-serif; color: #111; position: relative; flex: none; }
.win { width: 16px; height: 16px; margin-left: 16px; }
.tsearch { margin-left: 16px; width: 288px; height: 40px; background: #fff; border: 1px solid #c4c4c4; display: flex; align-items: center; }
.tsearch svg { width: 16px; height: 16px; margin-left: 11px; }
.tsearch span { margin-left: 12px; font-size: 14.5px; white-space: nowrap; letter-spacing: -.2px; color: #333; }
.tview { width: 17px; height: 16px; margin: 0 16px 0 16px; }
.app { width: 49px; height: 40px; display: flex; align-items: center; justify-content: center; position: relative; flex: none; }
.app svg { width: 24px; height: 24px; margin-right: 1px; }
.app.cop { margin-left: 2px; }
.app.cop svg { width: 26px; height: 24px; }
.app.edge { background: linear-gradient(90deg, #f6f2e7 45px, #d9d1bb 45px, #d9d1bb 46px, #f0e9d8 46px); }
.app.run::after { content: ""; position: absolute; left: 4px; bottom: 0; width: 40px; height: 2px; background: #0078d7; }
.app.edge::after { left: 0; width: 48px; }
.app.exp::after { background: linear-gradient(90deg, #0078d7 32px, #6aace0 32px); }
.weather { display: flex; align-items: center; margin-left: 133px; font-size: 13.5px; white-space: nowrap; position: relative; }
.weather svg { width: 26px; height: 26px; }
.wb { position: absolute; left: 15px; top: 0; width: 8px; text-align: center; font-size: 9px; line-height: 13px; color: #fff; font-weight: 600; }
.temp { margin-left: 7px; width: 38px; letter-spacing: -.3px; }
.sky { width: 75px; letter-spacing: -.1px; }
.tray { display: flex; align-items: center; margin-left: 21px; }
.t1 { width: 14px; height: 8px; }
.t2 { width: 12px; height: 16px; margin-left: 11px; }
.t3 { width: 17px; height: 13px; margin-left: 10px; }
.t4 { width: 14px; height: 14px; margin-left: 10px; }
.t5 { width: 17px; height: 14px; margin-left: 7px; }
.clock { width: 60px; margin-left: 8px; font-size: 12px; text-align: center; line-height: 18px; letter-spacing: -.5px; display: flex; flex-direction: column; }
.notif { margin-left: 17px; position: relative; }
.notif svg { width: 16px; height: 16px; }
.notif span { position: absolute; left: 8px; top: 7px; width: 16px; height: 16px; border-radius: 50%; border: 1px solid #777; background: #d5d1c6; font-size: 11px; line-height: 14px; text-align: center; }
.peek { position: absolute; right: 4px; top: 0; width: 1px; height: 40px; background: #b8b195; }
</style>
